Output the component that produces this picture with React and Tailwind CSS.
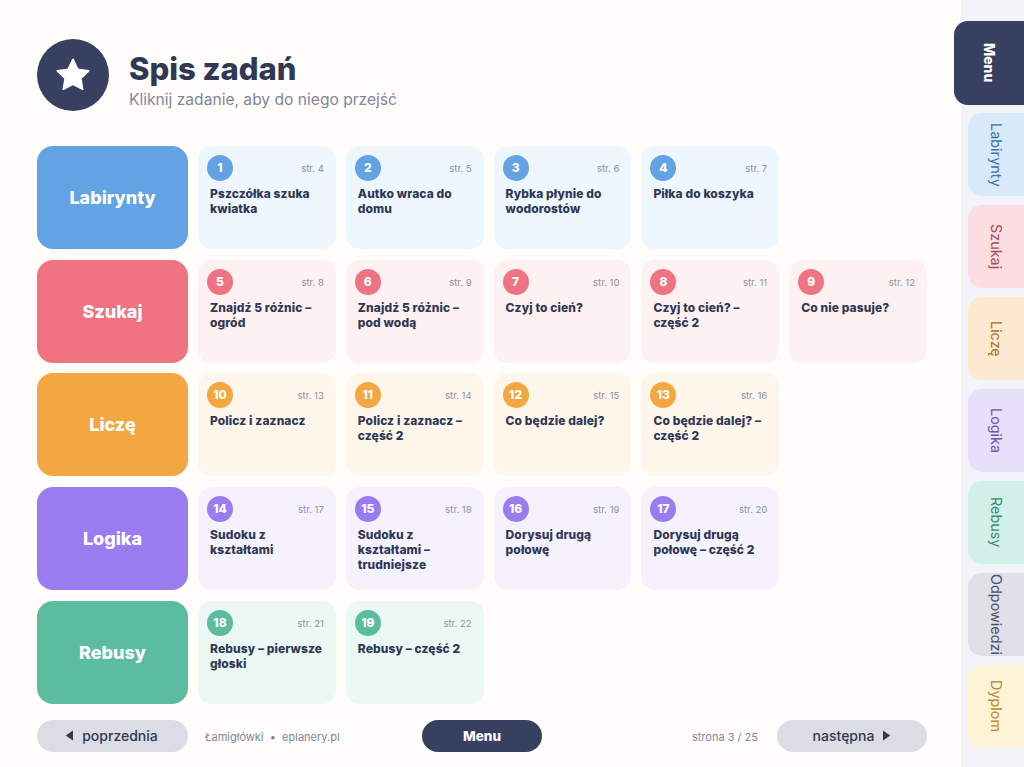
import React from 'react';

const groups = [
  {
    name: 'Labirynty', main: 'bg-[#63a2e3]', tile: 'bg-[#eef6fe]',
    items: [
      [1, 'Pszczółka szuka kwiatka', 4],
      [2, 'Autko wraca do domu', 5],
      [3, 'Rybka płynie do wodorostów', 6],
      [4, 'Piłka do koszyka', 7],
    ],
  },
  {
    name: 'Szukaj', main: 'bg-[#f07384]', tile: 'bg-[#fdf1f2]',
    items: [
      [5, 'Znajdź 5 różnic – ogród', 8],
      [6, 'Znajdź 5 różnic – pod wodą', 9],
      [7, 'Czyj to cień?', 10],
      [8, 'Czyj to cień? – część 2', 11],
      [9, 'Co nie pasuje?', 12],
    ],
  },
  {
    name: 'Liczę', main: 'bg-[#f4a641]', tile: 'bg-[#fef6eb]',
    items: [
      [10, 'Policz i zaznacz', 13],
      [11, 'Policz i zaznacz – część 2', 14],
      [12, 'Co będzie dalej?', 15],
      [13, 'Co będzie dalej? – część 2', 16],
    ],
  },
  {
    name: 'Logika', main: 'bg-[#9b7bf0]', tile: 'bg-[#f5f2fe]',
    items: [
      [14, 'Sudoku z kształtami', 17],
      [15, 'Sudoku z kształtami – trudniejsze', 18],
      [16, 'Dorysuj drugą połowę', 19],
      [17, 'Dorysuj drugą połowę – część 2', 20],
    ],
  },
  {
    name: 'Rebusy', main: 'bg-[#5bbca0]', tile: 'bg-[#ebf8f4]',
    items: [
      [18, 'Rebusy – pierwsze głoski', 21],
      [19, 'Rebusy – część 2', 22],
    ],
  },
];

const tabs = [
  ['Labirynty', 'bg-[#d8e9fa] text-[#3f73a8]'],
  ['Szukaj', 'bg-[#fcdde1] text-[#a94e5c]'],
  ['Liczę', 'bg-[#fde9cf] text-[#ab7026]'],
  ['Logika', 'bg-[#e8e0fb] text-[#6a53ad]'],
  ['Rebusy', 'bg-[#d2f0e7] text-[#3c8a72]'],
  ['Odpowiedzi', 'bg-[#e0e1e8] text-[#4a5068]'],
  ['Dyplom', 'bg-[#fef3d5] text-[#b58a32]'],
];

function Tile({ item, group }) {
  const [num, title, page] = item;
  return (
    <div className={`w-[137.8px] h-[103px] rounded-[14px] pl-[9px] pr-3 pt-[9px] ${group.tile}`}>
      <div className="flex items-center justify-between">
        <div className={`w-[26px] h-[26px] rounded-full flex items-center justify-center text-white text-[12px] font-extrabold ${group.main}`}>{num}</div>
        <span className="pt-[2px] text-[9.5px] text-[#8a90a8]">str. {page}</span>
      </div>
      <div className="mt-[5px] pl-[3px] text-[12px] leading-[15px] font-extrabold text-[#2f3855] tracking-[0.1px]">{title}</div>
    </div>
  );
}

export default function App() {
  return (
    <div className="w-[1024px] h-[767px] overflow-hidden flex bg-[#fffdf9]" style={{ fontFamily: 'Inter, "Noto Sans", sans-serif' }}>
      <main className="w-[961px] pl-[37px] pt-[39px] flex flex-col">
        <header className="flex items-start gap-[20px] h-[72px]">
          <div className="w-[72px] h-[72px] rounded-full bg-[#374060] flex items-center justify-center">
            <svg width="40" height="40" viewBox="0 0 24 24" fill="white" stroke="white" strokeWidth="1" strokeLinejoin="round">
              <path d="M12 2.6l2.9 6 6.5.9-4.7 4.6 1.1 6.5-5.8-3.1-5.8 3.1 1.1-6.5L2.6 9.5l6.5-.9z" />
            </svg>
          </div>
          <div className="mt-[12px]">
            <h1 className="text-[31px] leading-[36px] font-extrabold text-[#2f3855]">Spis zadań</h1>
            <p className="mt-[2px] text-[15.6px] leading-[22px] text-[#7f86a0]">Kliknij zadanie, aby do niego przejść</p>
          </div>
        </header>

        <div className="mt-[35px] flex flex-col gap-[10.7px]">
          {groups.map((g) => (
            <div key={g.name} className="flex gap-[10px]">
              <div className={`w-[151px] h-[103px] rounded-[16px] flex items-center justify-center text-white text-[18px] font-extrabold ${g.main}`}>{g.name}</div>
              {g.items.map((it) => (
                <Tile key={it[0]} item={it} group={g} />
              ))}
            </div>
          ))}
        </div>

        <footer className="mt-[16px] w-[890px] h-[32px] flex items-center">
          <button className="w-[151px] h-[32px] pr-[2px] rounded-full bg-[#dcdde4] text-[#2f3855] text-[14px] font-medium flex items-center justify-center gap-[8px]">
            <svg width="9" height="11" viewBox="0 0 9 11" fill="currentColor"><path d="M8 0.5v10L0.8 5.5z" /></svg>
            poprzednia
          </button>
          <span className="ml-[17px] pt-[2px] w-[217px] text-[11px] text-[#7f86a0]">Łamigłówki &nbsp;•&nbsp; eplanery.pl</span>
          <button className="w-[120px] h-[32px] rounded-full bg-[#374060] text-white text-[13.5px] font-extrabold">Menu</button>
          <span className="ml-auto mr-[19px] pt-[2px] text-[11px] text-[#7f86a0]">strona 3 / 25</span>
          <button className="w-[150px] h-[32px] rounded-full bg-[#dcdde4] text-[#2f3855] text-[14px] font-medium flex items-center justify-center gap-[8px]">
            następna
            <svg width="9" height="11" viewBox="0 0 9 11" fill="currentColor"><path d="M1 0.5v10L8.2 5.5z" /></svg>
          </button>
        </footer>
      </main>

      <aside className="w-[63px] bg-[#f3f4fa] pt-[21px] flex flex-col items-end">
        <div className="w-[70px] h-[84px] -ml-[7px] rounded-l-[14px] bg-[#374060] text-white text-[14px] font-extrabold flex items-center justify-center [writing-mode:vertical-rl]">Menu</div>
        <div className="mt-[8px] flex flex-col gap-[9px]">
          {tabs.map(([label, cls]) => (
            <div key={label} className={`w-[56px] h-[83px] rounded-l-[14px] text-[14.4px] flex items-center justify-center [writing-mode:vertical-rl] ${cls}`}>{label}</div>
          ))}
        </div>
      </aside>
    </div>
  );
}
